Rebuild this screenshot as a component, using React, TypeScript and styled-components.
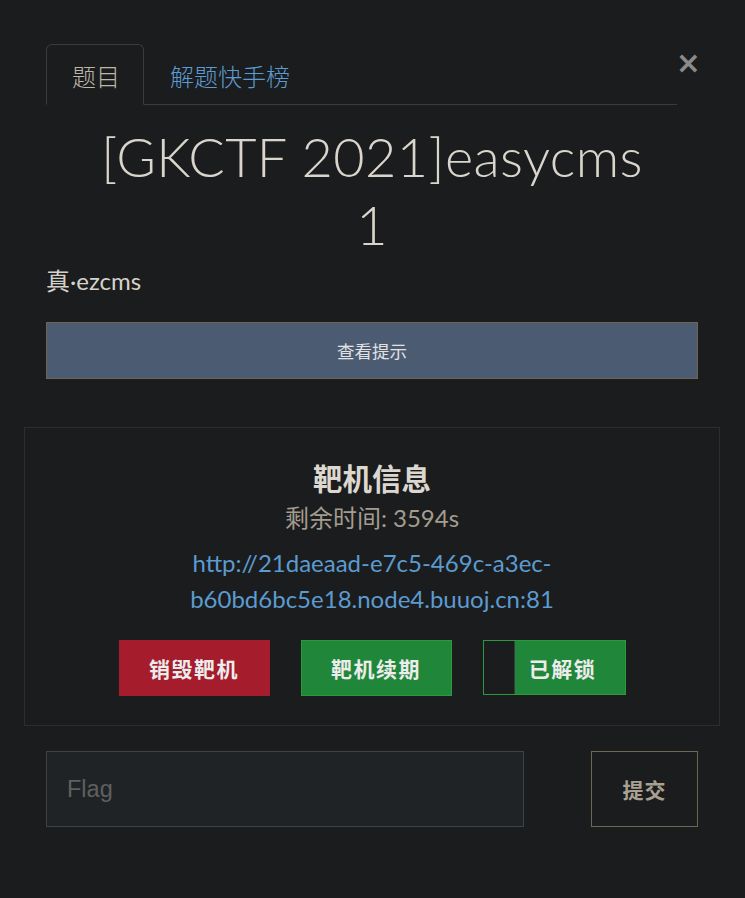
import React from "react";
import styled, { createGlobalStyle } from "styled-components";

const Global = createGlobalStyle`
  html, body { margin: 0; padding: 0; background: #1b1c1e; }
  body { font-family: Lato, "Noto Sans CJK SC", sans-serif; color: #d6d2ca; }
  * { box-sizing: border-box; }
`;

const Page = styled.div`
  padding: 44px 47px 40px 46px;
  min-height: 898px;
`;

const Header = styled.div`
  display: flex;
  align-items: flex-start;
`;

const Tabs = styled.div`
  flex: 1;
  display: flex;
  border-bottom: 1px solid #3a3b3e;
  margin-right: -1px;
`;

const Tab = styled.div<{ $active?: boolean }>`
  height: 61px;
  padding: 2px 23px 0 25px;
  display: flex;
  align-items: center;
  font-family: "Noto Sans CJK SC", sans-serif;
  font-size: 24px;
  font-weight: 300;
  margin-bottom: -1px;
  color: ${(p) => (p.$active ? "#bdb7aa" : "#5b9bd0")};
  border: 1px solid ${(p) => (p.$active ? "#3a3b3e" : "transparent")};
  border-bottom-color: ${(p) => (p.$active ? "#1b1c1e" : "transparent")};
  border-radius: 6px 6px 0 0;
`;

const Close = styled.div`
  font-family: "DejaVu Sans", sans-serif;
  font-size: 30px;
  font-weight: bold;
  color: #8a8a8a;
  line-height: 1;
  margin-top: 4px;
  margin-right: -3px;
`;

const Title = styled.h1`
  margin: 18px auto 0;
  max-width: 580px;
  text-align: center;
  font-family: Lato, sans-serif;
  font-weight: 300;
  font-size: 54px;
  line-height: 68px;
  letter-spacing: 0.4px;
  color: #d9d5cc;
`;

const Subtitle = styled.div`
  margin-top: 7px;
  font-size: 24px;
  line-height: 30px;
  color: #d6d2ca;
`;

const HintButton = styled.button`
  margin-top: 26px;
  width: 100%;
  height: 57px;
  background: #4b5b72;
  border: 1px solid #6e6450;
  color: #e2e2e2;
  font-family: "Noto Sans CJK SC", sans-serif;
  font-size: 17.5px;
  cursor: pointer;
`;

const InfoBox = styled.div`
  margin: 48px -22px 0;
  border: 1px solid #2c2d30;
  padding: 28px 0 29px;
  display: flex;
  flex-direction: column;
  align-items: center;
`;

const InfoTitle = styled.div`
  font-family: "Noto Sans CJK SC", sans-serif;
  font-size: 29.5px;
  font-weight: 700;
  line-height: 42px;
  color: #dcd8d0;
`;

const Remain = styled.div`
  font-size: 24px;
  line-height: 38px;
  color: #a39d90;
  font-family: "Noto Sans CJK SC", sans-serif;
  & span { font-family: Lato, sans-serif; }
`;

const Url = styled.a`
  margin-top: 8px;
  font-size: 24px;
  line-height: 36px;
  color: #5b9bd0;
  text-align: center;
  width: 400px;
  text-decoration: none;
`;

const Actions = styled.div`
  margin-top: 23px;
  display: flex;
  gap: 31px;
`;

const ActionButton = styled.button<{ $bg: string; $border: string }>`
  width: 151px;
  height: 56px;
  background: ${(p) => p.$bg};
  border: 1px solid ${(p) => p.$border};
  color: #ececec;
  font-family: "Noto Sans CJK SC", sans-serif;
  font-size: 21px;
  font-weight: 700;
  letter-spacing: 1.5px;
  padding: 0;
  display: flex;
  align-items: center;
  justify-content: center;
`;

const SplitButton = styled.div`
  width: 143px;
  height: 55px;
  border: 1px solid #2a9a3d;
  display: flex;
`;

const SplitDark = styled.div`
  width: 31px;
  background: #1b1c1e;
  border-right: 1px solid #3a3b3e;
`;

const SplitMain = styled.div`
  flex: 1;
  background: #20873a;
  color: #ececec;
  font-family: "Noto Sans CJK SC", sans-serif;
  font-size: 21px;
  font-weight: 700;
  letter-spacing: 1.5px;
  display: flex;
  align-items: center;
  justify-content: center;
  padding-right: 14px;
`;

const FlagRow = styled.div`
  margin-top: 25px;
  display: flex;
  justify-content: space-between;
`;

const FlagInput = styled.input`
  width: 478px;
  height: 76px;
  background: #202326;
  border: 1px solid #3f4345;
  padding: 0 20px;
  font-family: "Liberation Sans", Arial, sans-serif;
  font-size: 23.5px;
  color: #ccc;
  outline: none;
  &::placeholder { color: #5f5f5f; }
`;

const SubmitButton = styled.button`
  width: 107px;
  height: 76px;
  background: transparent;
  border: 1px solid #6e6655;
  color: #a8a192;
  font-family: "Noto Sans CJK SC", sans-serif;
  font-size: 21px;
  font-weight: 700;
  letter-spacing: 1px;
`;

export default function App() {
  return (
    <>
      <Global />
      <Page>
        <Header>
          <Tabs>
            <Tab $active>题目</Tab>
            <Tab>解题快手榜</Tab>
          </Tabs>
          <Close>×</Close>
        </Header>
        <Title>[GKCTF 2021]easycms 1</Title>
        <Subtitle>真·ezcms</Subtitle>
        <HintButton>查看提示</HintButton>
        <InfoBox>
          <InfoTitle>靶机信息</InfoTitle>
          <Remain>
            剩余时间<span>: 3594s</span>
          </Remain>
          <Url href="#">http://21daeaad-e7c5-469c-a3ec-b60bd6bc5e18.node4.buuoj.cn:81</Url>
          <Actions>
            <ActionButton $bg="#a51c2c" $border="#a51c2c">销毁靶机</ActionButton>
            <ActionButton $bg="#20873a" $border="#2a9a3d">靶机续期</ActionButton>
            <SplitButton>
              <SplitDark />
              <SplitMain>已解锁</SplitMain>
            </SplitButton>
          </Actions>
        </InfoBox>
        <FlagRow>
          <FlagInput placeholder="Flag" />
          <SubmitButton>提交</SubmitButton>
        </FlagRow>
      </Page>
    </>
  );
}
